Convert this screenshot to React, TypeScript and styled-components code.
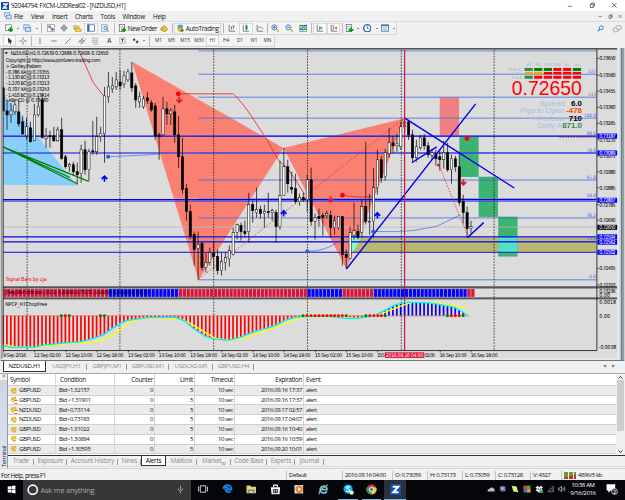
import React from "react";
import styled, { createGlobalStyle } from "styled-components";
import { RiBellFill } from "react-icons/ri";

const GlobalStyle = createGlobalStyle`
  * {
    box-sizing: border-box;
  }
  body {
    margin: 0;
    overflow: hidden;
    font-family: "Open Sans", "Noto Sans", sans-serif;
    font-size: 6.4px;
    letter-spacing: -0.35px;
    color: #111;
    background: #f0f0f0;
  }
  svg {
    display: block;
    letter-spacing: normal;
  }
`;

const Window = styled.div`
  width: 625px;
  height: 500px;
  display: flex;
  flex-direction: column;
  background: #f0f0f0;
  white-space: nowrap;
`;

const TitleBar = styled.div`
  height: 11px;
  display: flex;
  align-items: center;
  background: white;
  padding-left: 1px;
`;

const Title = styled.span`
  flex: 1;
  padding-left: 2px;
  font-size: 6.3px;
  line-height: 10px;
`;

const MenuBar = styled.div`
  height: 11px;
  display: flex;
  align-items: center;
  padding-left: 2px;
  border-bottom: 1px solid #dcdcdc;
`;

const MenuItem = styled.span<{ w: number }>`
  width: ${(props) => props.w}px;
  line-height: 9px;
  font-size: 6.3px;
  letter-spacing: -0.25px;
`;

const Fill = styled.div`
  flex: 1;
`;

const Toolbar = styled.div<{ h: number }>`
  height: ${(props) => props.h}px;
  display: flex;
  align-items: center;
`;

const Group = styled.div<{ h: number }>`
  height: ${(props) => props.h}px;
  display: flex;
  align-items: center;
  padding-left: 3px;
  border: 1px solid #d4d4d4;
  border-width: 0 1px 1px 0;
  background: #f3f3f3;
`;

const Tool = styled.div<{ w: number; active?: boolean }>`
  width: ${(props) => props.w}px;
  height: 11px;
  display: flex;
  align-items: center;
  justify-content: center;
  gap: 1px;
  font-size: 6.4px;
  background: ${(props) => (props.active ? "#fafafa" : "transparent")};
  box-shadow: ${(props) =>
    props.active ? "inset 0 0 0 0.6px #bfc4c8" : "none"};
`;

const Divider = styled.div<{ w: number }>`
  width: ${(props) => props.w}px;
  height: 10px;
  display: flex;
  justify-content: center;
  &::before {
    content: "";
    width: 1px;
    background: #b8b8b8;
  }
`;

const Caret = styled.div<{ w: number }>`
  width: ${(props) => props.w}px;
  display: flex;
  justify-content: center;
  &::before {
    content: "";
    border: 1.5px solid transparent;
    border-top-color: #222;
    margin-top: 1px;
  }
`;

const Period = styled.div<{ w: number; active?: boolean }>`
  width: ${(props) => props.w}px;
  height: 11px;
  line-height: 11px;
  text-align: center;
  font-size: 4.8px;
  letter-spacing: -0.05px;
  color: #333;
  background: ${(props) => (props.active ? "#fafafa" : "transparent")};
  box-shadow: ${(props) =>
    props.active ? "inset 0 0 0 0.6px #c4c4c4" : "none"};
`;

const ChartTabs = styled.div`
  height: 12px;
  display: flex;
  align-items: flex-start;
  padding-left: 3px;
`;

const ChartTab = styled.div<{ w: number; active?: boolean }>`
  width: ${(props) => props.w}px;
  height: 11px;
  line-height: 10px;
  text-align: center;
  font-size: 6.1px;
  letter-spacing: -0.25px;
  color: ${(props) => (props.active ? "#000" : "#8a8a8a")};
  background: ${(props) => (props.active ? "white" : "transparent")};
  border: 1px solid #333;
  border-width: ${(props) => (props.active ? "0 1px 1px 1px" : "0")};
  position: relative;
  &::after {
    content: "";
    position: absolute;
    right: 0;
    top: 3px;
    width: ${(props) => (props.active ? 0 : 1)}px;
    height: 6px;
    background: #999;
  }
`;

const TabArrows = styled.span`
  margin-left: auto;
  padding-right: 4px;
  font-size: 4px;
  line-height: 10px;
  letter-spacing: 6px;
  color: #777;
`;

const Terminal = styled.div`
  height: 95px;
  display: flex;
  border-top: 1px solid #aaa;
`;

const TerminalSide = styled.div`
  width: 7px;
  height: 93px;
  display: flex;
  flex-direction: column;
  align-items: center;
  justify-content: space-between;
  background: linear-gradient(#f0f0f0 6px, #ccd6e2 6px, #dde6f0);
  font-size: 5.8px;
  line-height: 6px;
`;

const SideLabel = styled.span`
  writing-mode: vertical-rl;
  transform: rotate(180deg);
  color: #223;
`;

const TerminalBody = styled.div`
  flex: 1;
  display: flex;
  flex-direction: column;
  border-left: 1px solid #999;
`;

const TableArea = styled.div`
  height: 82px;
  display: flex;
  border-bottom: 1px solid #333;
  background: white;
`;

const Table = styled.div`
  flex: 1;
`;

const TableRow = styled.div<{ shaded?: boolean; head?: boolean }>`
  display: grid;
  grid-template-columns: 48px 59px 40px 40px 40px 69px 1fr;
  height: ${(props) => (props.head ? 11.7 : 9.77)}px;
  line-height: ${(props) => (props.head ? 11 : 8.6)}px;
  background: ${(props) => (props.shaded ? "#ebebeb" : "white")};
  border-bottom: 1px solid #cfcfcf;
  font-size: ${(props) => (props.head ? 6.3 : 6)}px;
  letter-spacing: ${(props) => (props.head ? -0.3 : -0.4)}px;
`;

const Cell = styled.div<{ right?: boolean; pad?: number }>`
  display: flex;
  align-items: center;
  justify-content: ${(props) => (props.right ? "flex-end" : "flex-start")};
  padding: 0 1px 0 ${(props) => props.pad ?? 2}px;
  border-right: 1px solid #d6d6d6;
  &:last-child {
    border-right: none;
  }
`;

const Bell = styled.span<{ muted?: boolean }>`
  position: relative;
  width: 9px;
  color: #e0b020;
  &::after {
    content: "";
    display: ${(props) => (props.muted ? "block" : "none")};
    position: absolute;
    right: 1px;
    bottom: 0;
    width: 4px;
    height: 4px;
    border-radius: 50%;
    background: linear-gradient(#e05030 1.4px, white 1.4px 2.6px, #e05030 2.6px);
  }
`;

const Scrollbar = styled.div`
  width: 9px;
  display: flex;
  flex-direction: column;
  align-items: center;
  justify-content: space-between;
  background: #f0f0f0;
  padding: 1px 0;
`;

const Thumb = styled.div`
  width: 7px;
  height: 51px;
  background: #cdcdcd;
  margin: -6px 0 12px;
`;

const BottomTabs = styled.div`
  height: 11px;
  display: flex;
  align-items: flex-start;
  border-bottom: 1px solid #ddd;
`;

const BottomTab = styled(ChartTab)`
  font-size: 6.2px;
  letter-spacing: -0.15px;
  height: 10px;
  line-height: 9px;
`;

const Badge = styled.sub`
  color: red;
  font-size: 4px;
  line-height: 0;
`;

const StatusBar = styled.div`
  height: 12px;
  display: flex;
  align-items: center;
  border-top: 1px solid #d5d5d5;
  font-size: 6px;
  letter-spacing: -0.42px;
  padding-top: 1px;
`;

const StatusCell = styled.div<{ w: number }>`
  width: ${(props) => props.w}px;
  height: 9px;
  line-height: 9px;
  padding-left: 2px;
  display: flex;
  align-items: center;
  gap: 2px;
  border-left: 1px solid #c4c4c4;
  &:first-child {
    border-left: none;
    padding-left: 1px;
    font-size: 6.3px;
  }
`;

const Taskbar = styled.div`
  height: 20px;
  display: flex;
  align-items: stretch;
  background: #04060a;
`;

const Task = styled.div<{ w: number; open?: boolean; active?: boolean }>`
  width: ${(props) => props.w}px;
  display: flex;
  align-items: center;
  justify-content: center;
  background: ${(props) => (props.active ? "#2c3038" : "transparent")};
  border-bottom: 1.5px solid ${(props) => (props.open ? "#76b9ed" : "transparent")};
  padding-bottom: 1px;
`;

const SearchBox = styled.div`
  width: 168px;
  display: flex;
  align-items: center;
  gap: 2px;
  padding: 0 6px 1px 4px;
  background: #363738;
  color: #a9a9a9;
  font-size: 7.5px;
  letter-spacing: -0.25px;
`;

const Clock = styled.div`
  width: 32px;
  text-align: center;
  color: white;
  font-size: 6px;
  line-height: 8.3px;
  padding-top: 1px;
`;

const FIRST_X = 2.5;
const STEP = 3.907;

// [high, low, bodyTop, bodyBottom, bearish]
const candles: number[][] = [
  [87, 112, 88, 111, 1],
  [100, 130, 111, 115, 1],
  [103, 123, 111, 115, 0],
  [100, 115, 105, 112, 0],
  [100, 127, 112, 124, 1],
  [116, 135, 122, 134, 1],
  [118, 140, 127, 136, 0],
  [122, 142, 128, 142, 1],
  [104, 141, 115, 141, 0],
  [96, 117, 107, 115, 0],
  [93, 139, 100, 137.7, 1],
  [128, 148, 136.5, 139, 0],
  [131, 148, 136, 137, 1],
  [127, 142, 136, 141, 1],
  [127, 142, 130, 141, 0],
  [118, 160, 130, 158.5, 1],
  [155, 169, 157, 167, 1],
  [163, 172, 165, 167, 0],
  [162, 176, 165, 172, 1],
  [163, 185, 172, 175, 1],
  [145, 183, 150, 174, 0],
  [141, 175, 150, 170, 1],
  [149, 181, 152, 170, 0],
  [121, 155, 151, 152, 1],
  [117, 155, 137, 152, 0],
  [127, 142, 134, 137, 0],
  [87, 163, 96, 134, 0],
  [72, 103, 87, 97, 0],
  [77, 93, 86, 89, 0],
  [72, 90, 80, 87, 0],
  [70, 90, 82, 86, 1],
  [71, 88, 76, 84, 0],
  [69, 82, 72, 80, 0],
  [62, 92, 73, 88, 1],
  [83, 108, 86, 100, 1],
  [92, 108, 97, 102, 0],
  [96, 109, 99, 107, 0],
  [92, 104, 98, 101, 1],
  [100, 112, 103, 110, 1],
  [103, 140, 106, 136, 1],
  [133, 160, 135, 137, 1],
  [97, 136, 109, 135, 0],
  [102, 125, 109, 114, 1],
  [108, 125, 111, 114, 0],
  [105, 143, 112, 135, 1],
  [116, 168, 135, 157, 1],
  [138, 194, 157, 190, 1],
  [184, 221, 189, 212, 1],
  [205, 240, 212, 237, 1],
  [232, 266, 235, 250, 1],
  [232, 280, 245, 249, 0],
  [242, 271, 244, 268, 1],
  [253, 273, 263, 268, 0],
  [248, 266, 253, 263, 0],
  [241, 270, 254, 257, 1],
  [250, 275, 257, 271, 1],
  [253, 276, 262, 271, 0],
  [253, 271, 258, 263, 0],
  [246, 267, 251, 259, 0],
  [228, 256, 233, 255, 0],
  [224, 240, 225, 233, 0],
  [223, 241, 226, 232, 1],
  [221, 238, 232, 234, 1],
  [193, 243, 205, 232, 0],
  [201, 223, 205, 211, 1],
  [188, 218, 210, 213, 0],
  [206, 219, 210, 214, 1],
  [205, 228, 212, 214, 0],
  [193, 218, 212, 213, 1],
  [209, 221, 211, 213, 0],
  [210, 243, 213, 227, 1],
  [161, 230, 196, 227, 0],
  [148, 196, 167, 196, 0],
  [160, 193, 167, 184, 1],
  [172, 194, 188, 189.5, 1],
  [174, 204, 189, 202, 1],
  [194, 206, 198, 202, 0],
  [193, 202, 198, 200, 1],
  [175, 212, 180, 200, 0],
  [168, 226, 180, 222, 1],
  [214, 240, 218, 222, 0],
  [209, 227, 217, 219, 1],
  [213, 236, 216, 218, 1],
  [211, 219, 214, 216, 0],
  [211, 238, 216, 228, 1],
  [216, 235, 221, 228, 0],
  [217, 230, 217, 228, 0],
  [217, 266, 217, 255, 1],
  [250, 269, 255, 258, 1],
  [227, 260, 233, 259, 0],
  [203, 240, 231, 236, 0],
  [225, 240, 232, 238, 1],
  [200, 238, 207, 233, 0],
  [142, 225, 207, 222, 1],
  [194, 235, 222, 223, 0],
  [168, 238, 188, 222, 0],
  [150, 195, 160, 188, 0],
  [156, 183, 160, 178, 1],
  [149, 181, 153, 177, 0],
  [128, 158, 143, 154, 0],
  [136, 153, 143, 146, 1],
  [134, 152, 144, 146, 0],
  [122, 150, 127, 147, 0],
  [118, 133, 122, 127, 0],
  [120, 140, 122, 135, 1],
  [130, 162, 135, 158, 1],
  [140, 162, 147, 158, 0],
  [135, 150, 138, 148, 0],
  [134, 150, 138, 146, 1],
  [142, 158, 146, 155, 1],
  [149, 160, 153, 156, 0],
  [150, 166, 154, 159, 1],
  [150, 171, 157, 160, 1],
  [141, 169, 153, 160, 0],
  [143, 172, 153, 170, 1],
  [155, 184, 159, 170, 0],
  [156, 172, 159, 167, 1],
  [152, 206, 167, 203, 1],
  [195, 224, 202, 213, 1],
  [207, 238, 213, 229, 1],
  [221, 235, 227, 229, 0],
];

const fastLine = [
  [2.7, 346], [10, 348], [33, 348], [45, 345.5], [60, 344], [80, 342.5],
  [90, 340], [103, 335.5], [112, 329], [120, 324], [127, 321], [150, 318],
  [175, 318], [185, 322], [193, 329], [205, 337], [213, 339.5], [228, 341],
  [240, 338], [255, 332], [270, 328], [278, 325], [285, 321], [295, 318],
  [310, 317], [330, 317], [345, 319], [360, 319], [375, 316], [385, 311],
  [395, 305.5], [405, 303], [415, 303], [430, 303.5], [445, 306], [455, 308],
  [462, 312], [468, 316],
];

const slowLine = [
  [2.7, 345], [15, 347.5], [35, 348], [50, 346], [70, 344], [90, 343],
  [105, 340], [119, 331], [130, 322], [145, 318.5], [165, 318.5],
  [180, 319.5], [190, 324], [205, 333], [215, 339], [228, 341], [245, 338.5],
  [260, 333], [275, 328], [290, 322], [300, 318.5], [315, 317], [340, 318],
  [360, 319], [380, 315], [400, 307], [412, 303], [430, 303], [445, 305],
  [457, 306.5], [468, 309.5],
];

const toPoints = (line: number[][]) => line.map((p) => p.join(",")).join(" ");

const valueAt = (line: number[][], x: number) => {
  const i = line.findIndex((p) => p[0] >= x);
  if (i <= 0) return line[0][1];
  const [x0, y0] = line[i - 1];
  const [x1, y1] = line[i];
  return y0 + ((y1 - y0) * (x - x0)) / (x1 - x0);
};

const fibs: [number, string][] = [
  [74.3, "127"], [97.3, "113"], [118.3, "100.0"], [136.3, "88.6"],
  [153.3, "78.6"], [180.3, "61.8"], [199, "50.0"], [218.3, "38.2"],
  [242, "23.6"], [280.3, "0.0"],
];

const levels = [136.3, 153.3, 199.8, 201.4, 237.3, 242.3, 252.7];
const days = [26.5, 119.5, 213.5, 307.5, 401.5, 494.5];

const prices: [number, string][] = [
  [58.5, "0.73650"], [75.3, "0.73560"], [91.3, "0.73455"],
  [107.7, "0.73360"], [123.7, "0.73265"], [140, "0.73170"],
  [156, "0.73075"], [172, "0.72980"], [188, "0.72885"], [205, "0.72785"],
  [220.7, "0.72690"], [269, "0.72405"], [285.5, "0.72310"],
];

const priceTags: [number, string, string][] = [
  [136.3, "0.73187", "#0000f0"],
  [153.2, "0.73089", "#0000f0"],
  [200.6, "0.72807", "#0000f0"],
  [227.7, "0.72650", "#000"],
  [237.3, "0.72594", "#0000f0"],
  [242.6, "0.72562", "#0000f0"],
  [252.7, "0.72502", "#0000f0"],
];

const times: [number, string, number][] = [
  [2.5, "9 Sep 2016", 23], [33.5, "12 Sep 02:00", 27],
  [65, "12 Sep 10:00", 27], [96, "12 Sep 18:00", 27],
  [127.5, "13 Sep 02:00", 27], [158.5, "13 Sep 10:00", 27],
  [190, "13 Sep 18:00", 27], [221, "14 Sep 02:00", 27],
  [252.5, "14 Sep 10:00", 27], [283.5, "14 Sep 18:00", 27],
  [315, "15 Sep 02:00", 27], [346, "15 Sep 10:00", 27],
  [377.3, "15 S", 7.4], [424.8, "02:00", 10.5],
  [440, "16 Sep 10:00", 27], [471, "16 Sep 18:00", 27],
];

const patternLines = [
  "- 0.786 XA @ 0.73355", "- 1.130 BC @ 0.73213", "- 1.270 BC @ 0.73213",
  "- 0.707 XA @ 0.73253", "- 1.410 BC @ 0.73414", "- AB=CD @ 0.73480",
];

const signals = [
  ["#2e8b57", "green", "green", "red", "red", "green"],
  ["orange", "orange", "red", "red", "red", "red"],
  ["#2e8b57", "red", "red", "red", "red", "red"],
];
const signalX = [525, 534.6, 544.3, 553.8, 563.6, 573.4];

const dots: [number, string][] = [
  [60.7, "g"], [64.7, "r"], [68.7, "g"], [100, "g"], [104, "g"], [303, "g"],
  [307, "r"], [311, "r"], [315, "r"], [319, "r"], [323, "r"], [327, "r"],
  [331, "r"], [334.6, "r"], [338.5, "r"], [342.4, "r"], [346.3, "g"],
  [366, "g"], [370, "r"], [374, "r"], [378, "r"], [381.5, "r"], [385.3, "g"],
  [447.7, "g"], [451.7, "r"], [455.6, "r"], [459.5, "r"], [463.5, "g"],
];

const trendColor = (x: number) => {
  if (x < 105) return "#dc143c";
  if (x < 175) return "#0000ff";
  if (x < 305) return "#dc143c";
  if (x < 340) return "#0000ff";
  if (x < 371) return "#dc143c";
  if (x < 465) return "#0000ff";
  return "#dc143c";
};

const Marker = ({ x, y, down }: { x: number; y: number; down?: boolean }) => (
  <path
    d="M-2.8 0.4L0-2.6L2.8 0.4M0-2V3"
    transform={`translate(${x} ${y})${down ? " rotate(180)" : ""}`}
    fill="none"
    stroke={down ? "#dc143c" : "#0000ff"}
    strokeWidth={1.7}
  />
);

const Chart = () => (
  <svg
    width="625"
    height="314"
    viewBox="0 48 625 314"
    fontFamily="'DejaVu Sans Condensed', 'DejaVu Sans', sans-serif"
    fontSize="5.3"
  >
    <rect x="0" y="48" width="625" height="314" fill="#dcdcdc" />
    <rect x="0" y="47" width="618" height="2.6" fill="#555" />

    <polygon points="2.7,94 76.7,185.7 2.7,185" fill="#87cefa" />
    <polygon points="131.7,61.7 283.5,148.3 198.3,280.5" fill="#fa8072" />
    <polygon points="283.5,148.3 405,118.3 346.5,269.5" fill="#fa8072" />
    <polygon points="350,237.5 361,237.5 353,253 350,253" fill="#7fffd4" />
    <polygon points="361,238 597,238 597,253 353,253" fill="#bdb76b" />
    <rect x="440" y="97.5" width="19.4" height="39" fill="#f08080" />
    <rect x="459.7" y="136.7" width="19.3" height="40.5" fill="#3cb371" />
    <rect x="479" y="177" width="19.3" height="40.3" fill="#3cb371" />
    <rect x="498.6" y="217" width="19.4" height="40" fill="#3cb371" />
    <rect x="498.6" y="238" width="19.4" height="15" fill="#4fe3c5" />

    <line x1="2" x2="597" y1="227.5" y2="227.5" stroke="#bbb" strokeWidth="0.8" />
    <line x1="198" x2="597" y1="51" y2="51" stroke="#4169e1" strokeWidth="0.7" />
    {fibs.map(([y]) => (
      <line key={y} x1="198" x2="597" y1={y} y2={y} stroke="#4169e1" strokeWidth="0.8" />
    ))}
    {levels.map((y) => (
      <g key={y}>
        <line x1="2" x2="597" y1={y} y2={y} stroke="#fff7b0" strokeWidth="2" opacity="0.35" />
        <line x1="2" x2="597" y1={y} y2={y} stroke="#0000f0" strokeWidth="1.1" />
      </g>
    ))}
    {days.map((x) => (
      <line key={x} x1={x} x2={x} y1="50" y2="351" stroke="#222" strokeWidth="0.8" strokeDasharray="1.6 1.3" />
    ))}

    <path
      d="M78 50L93 83L104 97M178 93.9H233Q236 96 247 110L267 140L278 160L288 169L305 195M342.5 195.5Q355 198 374 197"
      fill="none"
      stroke="#ee2020"
      strokeWidth="0.8"
    />
    <path d="M198 280L405 118" stroke="#f22" strokeWidth="0.7" strokeDasharray="2 1.6" />
    <path d="M439 165L468 236M560 137.7H597" stroke="#f22" strokeWidth="0.8" strokeDasharray="1.5 1.3" />
    <path
      d="M107.7 157L150 155L160 154M307.3 251.7Q324 252 337 243M373 232H400L415 230.7L437 226.7L461 215"
      fill="none"
      stroke="#4169e1"
      strokeWidth="0.7"
    />

    {candles.map(([high, low, top, bottom, bear], i) => {
      const x = FIRST_X + STEP * i;
      return (
        <g key={i} stroke="#000">
          <line x1={x} x2={x} y1={high} y2={low} strokeWidth="0.7" />
          <rect
            x={x - 1.1}
            y={top}
            width="2.2"
            height={bottom - top}
            fill={bear ? "#000" : "#fff"}
            strokeWidth={bear ? 0.6 : 0.5}
          />
        </g>
      );
    })}

    <path
      d="M2.7 147.3L76.7 184M2.7 147.3L88.3 181.7M2.7 147.3L69.3 177.7"
      stroke="green"
      strokeWidth="1.2"
    />
    <path
      d="M346.5 269.5L476 104M405 118.3L514.7 188.3M412 163L437 147M468 238L484 223"
      stroke="#0000f0"
      strokeWidth="1.4"
    />
    <line x1="404.8" x2="404.8" y1="50" y2="351" stroke="#dc143c" strokeWidth="1.2" />

    {[[107.7, 157], [307.3, 251.7], [373.4, 232]].map(([x, y]) => (
      <circle key={x} cx={x} cy={y} r="2.1" fill="#3060d8" />
    ))}
    {[[178, 93.9], [342.5, 195.5], [467.3, 138.7]].map(([x, y]) => (
      <circle key={x} cx={x} cy={y} r="2.4" fill="red" />
    ))}
    <circle cx="438.8" cy="165.4" r="1.3" fill="red" />
    <Marker x={104} y={179} />
    <Marker x={283.6} y={213.8} />
    <Marker x={377.5} y={215.8} />
    <Marker x={179} y={100} down />
    <Marker x={330.7} y={199.5} down />
    <Marker x={463.7} y={182.5} down />

    <path d="M4 52.3H7.2L5.6 54.2Z" />
    <text x="10" y="55.2" textLength="98">NZDUSD,H1  0.72639 0.72686 0.72606 0.72650</text>
    <text x="5" y="61.9" textLength="95">Copyright @ http://www.pointzero-trading.com</text>
    <text x="5" y="67.9" textLength="36">&gt; Gartley Pattern</text>
    {patternLines.map((line, i) => (
      <text key={line} x="5" y={73.6 + i * 5.8} textLength={i === 5 ? 43 : 44}>
        {line}
      </text>
    ))}
    <text x="5" y="281.4" fill="red" fontSize="5.6" textLength="41">Signal Bars by cja</text>

    <g fill="#4169e1" fontSize="4.6" textAnchor="end">
      {fibs.map(([y, label]) => (
        <text key={label} x="596.5" y={y - 1.3}>{label}</text>
      ))}
    </g>

    <g fontFamily="'Liberation Sans', sans-serif">
      <g fontSize="3.8" fill="#a3b8d4">
        {["M1", "M5", "M15", "M30", "H1", "H4"].map((label, i) => (
          <text key={label} x={signalX[i] + 4} y="66" textAnchor="middle">{label}</text>
        ))}
        <text x="509" y="70.9" textLength="13.3">MACD</text>
        <text x="513.5" y="74.8" textLength="8.8">STR</text>
        <text x="512.5" y="78.8" textLength="9.8">EMA</text>
      </g>
      {signals.map((row, r) =>
        row.map((color, c) => (
          <rect key={`${r}${c}`} x={signalX[c]} y={[68, 72, 75.8][r]} width="8.2" height={r === 1 ? 2.4 : 3} fill={color} />
        ))
      )}
      <text x="512.3" y="95.5" fontSize="19.4" fill="red" textLength="70">0.72650</text>
      <g fontSize="8" fill="#a9c0e0">
        <text x="540" y="105.8" textLength="25.5">Spread</text>
        <text x="521" y="113.2" textLength="44">Pips to Open</text>
        <text x="533.5" y="120.8" textLength="31.5">Hi to Low</text>
        <text x="537.5" y="128">Daily A</text>
      </g>
      <g fontSize="7.9" fontWeight="bold" textAnchor="end">
        <text x="582.5" y="105.8">6.0</text>
        <text x="582.5" y="113.2" fill="#ff4500">-478</text>
        <text x="582.5" y="120.8">710</text>
        <text x="582.5" y="128" fill="#2e8b57">871.0</text>
      </g>
    </g>

    <rect x="2" y="286.8" width="616" height="2.2" fill="#555" />
    {candles.map((_, i) => {
      const x = 2.7 + STEP * i;
      return <rect key={i} x={x} y="289.6" width="3.3" height="7.8" fill={trendColor(x)} />;
    })}
    <text x="5" y="295" textLength="143" fontSize="5.2">
      Deep Bar Indicator (33,1) -1.00000 0.73172 -1.00000 -1.00000 0.73172
    </text>
    <rect x="2" y="297.9" width="616" height="2" fill="#555" />

    {candles.map((_, i) => {
      const x = FIRST_X + STEP * i;
      if (x > 467) return null;
      const y = valueAt(fastLine, x);
      const up = y < 316.3;
      const blue = up && x > 380;
      return (
        <rect
          key={i}
          x={x - 1}
          y={up ? y : 316.3}
          width="1.7"
          height={Math.abs(y - 316.3)}
          fill={blue ? "#0000f0" : "red"}
        />
      );
    })}
    <line x1="2" x2="470" y1="316.4" y2="316.4" stroke="#e05040" strokeWidth="0.6" />
    <polyline points={toPoints(slowLine)} fill="none" stroke="#ffff00" strokeWidth="1.3" />
    <polyline points={toPoints(fastLine)} fill="none" stroke="#00f0ff" strokeWidth="1.3" />
    {dots.map(([x, c]) => (
      <circle key={x} cx={x} cy="316.4" r="1.5" fill={c === "g" ? "green" : "red"} />
    ))}
    <text x="4.5" y="306.2" textLength="42">NPCP_HTChopFree</text>

    <path d="M2.5 49V351.2H597.5V49" fill="none" stroke="#222" strokeWidth="0.9" />
    {times.map(([x, label, w]) => (
      <g key={label}>
        {label !== "02:00" && (
          <line x1={x + 0.5} x2={x + 0.5} y1="351" y2="353" stroke="#222" strokeWidth="0.7" />
        )}
        <text x={x} y="357.7" fontSize="5.1" textLength={w}>{label}</text>
      </g>
    ))}
    <rect x="385" y="353" width="39.5" height="5.6" fill="#dc143c" />
    <text x="386" y="357.6" fontSize="5" fill="white" textLength="37.5">2016.09.16 04:00</text>

    {prices.map(([y, label]) => (
      <g key={label}>
        <line x1="597.5" x2="599.5" y1={y} y2={y} stroke="#222" strokeWidth="0.7" />
        <text x="600" y={y + 1.9} textLength="16.3">{label}</text>
      </g>
    ))}
    {priceTags.map(([y, label, color]) => (
      <g key={label}>
        <rect x="598" y={y - 2.5} width="20" height="5" fill={color} />
        <text x="600" y={y + 1.9} fill="white" textLength="16.3">{label}</text>
      </g>
    ))}
    <text x="600" y="293.6" textLength="16.3">0.73236</text>
    <text x="600" y="298">0.00</text>
    <text x="600" y="304.8">0.0018</text>
    <text x="600" y="318.3">0.00</text>
    <text x="599.5" y="349.8" textLength="17.5">-0.0038</text>

    <rect x="0" y="48" width="2" height="313" fill="#9a9a9a" />
    <rect x="618" y="48" width="2" height="313" fill="#e8eef4" />
    <rect x="620" y="48" width="2" height="313" fill="#b4d4ee" />
    <rect x="622" y="48" width="1" height="313" fill="#33454f" />
    <rect x="623" y="48" width="2" height="313" fill="#9a9a9a" />
    <rect x="0" y="359.3" width="620" height="1.2" fill="#eee" />
    <rect x="0" y="361" width="625" height="1" fill="#444" />
  </svg>
);

const icons = {
  logo: (
    <>
      <rect width="10" height="10" fill="#0f4fb5" />
      <path d="M2.5 2.5H7.5L3 7.5H7.8" fill="none" stroke="white" strokeWidth="1.8" />
    </>
  ),
  frames: (
    <>
      <rect x="1" y="1" width="6" height="5" fill="#e6f2fc" stroke="#5b92c8" />
      <rect x="3" y="4" width="6" height="4.5" fill="#cfe4f8" stroke="#5b92c8" />
    </>
  ),
  addChart: (
    <>
      <rect x="0.7" y="1" width="7" height="6.5" fill="white" stroke="#557" strokeWidth="0.7" />
      <path d="M6.8 3.5V10M3.5 6.7H10" stroke="#10a020" strokeWidth="2.4" />
    </>
  ),
  market: (
    <>
      <rect x="0.7" y="0.7" width="8.6" height="8.6" fill="white" stroke="#88a" strokeWidth="0.8" />
      <path d="M2.5 5V2.5H5" stroke="#1c9e3a" strokeWidth="1.5" fill="none" />
      <path d="M3.5 3.5L7.5 7.5" stroke="#e05020" strokeWidth="1.6" />
      <path d="M7.5 5V7.5H5" stroke="#2060d0" strokeWidth="1.3" fill="none" />
    </>
  ),
  target: (
    <>
      <circle cx="5" cy="5" r="2.8" fill="none" stroke="#666" />
      <path d="M5 0V10M0 5H10" stroke="#666" strokeWidth="0.8" />
    </>
  ),
  folders: (
    <>
      <path d="M1 2H4L5 3H7V6H1Z" fill="#f7d34c" stroke="#a8801c" strokeWidth="0.7" />
      <path d="M3 5H6L7 6H9.5V9.2H3Z" fill="#f7d34c" stroke="#a8801c" strokeWidth="0.7" />
    </>
  ),
  panel: (
    <>
      <rect x="0.7" y="1" width="8.6" height="8" fill="white" stroke="#3a70b0" />
      <rect x="1" y="1" width="2" height="8" fill="#2d62a6" />
    </>
  ),
  tester: (
    <>
      <rect x="0.7" y="1" width="7" height="8" fill="#eef5fc" stroke="#6a92bc" strokeWidth="0.8" />
      <circle cx="5.5" cy="5" r="2" fill="#d4e9fb" stroke="#4678a8" />
      <path d="M7 6.5L9.5 9.5" stroke="#4678a8" strokeWidth="1.2" />
    </>
  ),
  order: (
    <>
      <rect x="1.5" y="0.7" width="6" height="8" fill="white" stroke="#557" strokeWidth="0.8" />
      <path d="M3 3H6M3 5H5" stroke="#557" strokeWidth="0.7" />
      <path d="M7 4.2V10M4.1 7.1H9.9" stroke="#10a020" strokeWidth="2.3" />
    </>
  ),
  gold: (
    <path d="M1 5L5 2L9 6L6 9L1 7Z" fill="#edbd34" stroke="#a87410" strokeWidth="0.8" />
  ),
  auto: (
    <>
      <ellipse cx="5" cy="3" rx="3.3" ry="2.3" fill="#50a0c8" />
      <path d="M1 5Q5 3 9 5L8 9H3Z" fill="#e2b23a" />
      <path d="M5.8 5.2L10 7.5L5.8 9.8Z" fill="#18a030" />
    </>
  ),
  bars: (
    <path d="M1.5 1V9H9M4.5 3V7M7 2V6M6 2.5H8M3.5 5H4.5" fill="none" stroke="#456" strokeWidth="0.9" />
  ),
  candle: (
    <>
      <path d="M1.5 1V9H9M5.5 0.5V8" fill="none" stroke="#456" strokeWidth="0.9" />
      <rect x="4.2" y="2" width="2.8" height="4.5" fill="#18a030" />
    </>
  ),
  lineChart: (
    <>
      <path d="M1.5 1V9H9" fill="none" stroke="#456" strokeWidth="0.9" />
      <path d="M2 6Q4 2 6 4T9 6" fill="none" stroke="#3a9a50" strokeWidth="0.9" />
    </>
  ),
  zoomIn: (
    <>
      <circle cx="4" cy="4" r="3" fill="#d8ecfb" stroke="#3a78b8" />
      <path d="M4 2.5V5.5M2.5 4H5.5" stroke="#1850a0" strokeWidth="0.9" />
      <path d="M6.2 6.2L9.2 9.2" stroke="#d8a83c" strokeWidth="1.7" />
    </>
  ),
  zoomOut: (
    <>
      <circle cx="4" cy="4" r="3" fill="#d8ecfb" stroke="#3a78b8" />
      <path d="M2.5 4H5.5" stroke="#1850a0" strokeWidth="0.9" />
      <path d="M6.2 6.2L9.2 9.2" stroke="#d8a83c" strokeWidth="1.7" />
    </>
  ),
  tiles: (
    <>
      <rect x="0.5" y="1" width="4.3" height="3.8" fill="#3c9c3c" />
      <rect x="5.2" y="1" width="4.3" height="3.8" fill="#2c60b0" />
      <rect x="0.5" y="5.2" width="4.3" height="3.8" fill="#2c60b0" />
      <rect x="5.2" y="5.2" width="4.3" height="3.8" fill="#3c9c3c" />
      <path d="M1.2 3.4H4.2M5.9 3.4H8.9M1.2 7.6H4.2M5.9 7.6H8.9" stroke="white" strokeWidth="1.2" />
    </>
  ),
  scroll: (
    <>
      <path d="M1.5 1V9H9M4.5 3V8" fill="none" stroke="#456" strokeWidth="0.9" />
      <path d="M5.5 3L8.5 5L5.5 7Z" fill="#18a030" />
    </>
  ),
  shift: (
    <>
      <path d="M1.5 1V9H9M4 1V8" fill="none" stroke="#456" strokeWidth="0.9" />
      <path d="M8.5 3L5.5 5L8.5 7Z" fill="#d04020" />
    </>
  ),
  clock: (
    <>
      <circle cx="5" cy="5" r="4.2" fill="white" stroke="#1f66c0" strokeWidth="1.6" />
      <path d="M5 2.5V5H7" fill="none" stroke="#246" strokeWidth="0.9" />
    </>
  ),
  template: (
    <>
      <rect x="0.5" y="1" width="9" height="8" fill="white" stroke="#3a78b8" />
      <path d="M0.5 2H9.5" stroke="#3a78b8" strokeWidth="1.6" />
      <path d="M2 5L4 4.5L6 5.5L8 4M2 7.3H8" fill="none" stroke="#567" strokeWidth="0.7" />
    </>
  ),
  cursor: <path d="M3 0.5V8.5L4.8 6.7L6 9.5L7.2 9L6 6.4H8.4Z" fill="#222" />,
  cross: <path d="M5 0.5V4M5 6V9.5M0.5 5H4M6 5H9.5" stroke="#555" strokeWidth="0.9" />,
  vline: <path d="M5 1V9" stroke="#555" strokeWidth="0.9" />,
  hline: <path d="M1.5 5H8.5" stroke="#555" strokeWidth="0.9" />,
  diag: <path d="M1.5 8.5L8.5 1.5" stroke="#555" strokeWidth="0.9" />,
  channel: <path d="M0.5 7L7 1M3 9L9.5 3M2 4L6 8M4 2.5L8 6.5" stroke="#555" strokeWidth="0.9" />,
  fibo: <path d="M1 1.5H9M1 4H9M1 6.5H9M3 9H9" stroke="#666" strokeWidth="0.8" strokeDasharray="1.4 0.4" />,
  label: (
    <>
      <rect x="1" y="1" width="8" height="8" fill="none" stroke="#555" strokeWidth="0.8" strokeDasharray="1 0.6" />
      <path d="M3 3.3H7M5 3V7.3" stroke="#222" strokeWidth="1.1" />
    </>
  ),
  shapes: (
    <path d="M1 4L3 1.5L5 4L3 6ZM5 7L7.5 4.5L9.5 7L7.5 9.2Z" fill="#444" />
  ),
  search: (
    <>
      <circle cx="6" cy="4" r="2.8" fill="none" stroke="#2f6fc4" strokeWidth="1.2" />
      <path d="M4 6L1 9" stroke="#2f6fc4" strokeWidth="1.6" />
    </>
  ),
  chat: (
    <>
      <ellipse cx="3.8" cy="5.8" rx="3" ry="2.2" fill="#eee" stroke="#aaa" />
      <ellipse cx="6.7" cy="3.5" rx="2.8" ry="2.1" fill="#eee" stroke="#aaa" />
    </>
  ),
  minimize: <path d="M1.5 5.5H8.5" stroke="#222" />,
  restore: <path d="M2 3.5H6.5V8.5H2ZM3.8 3V1.5H8.3V6.5H7" fill="none" stroke="#222" />,
  close: <path d="M1.5 1.5L8.5 8.5M8.5 1.5L1.5 8.5" stroke="#222" />,
  windows: <path d="M0.8 1.8L4.5 1.3V4.7H0.8ZM5 1.2L9.4 0.5V4.7H5ZM0.8 5.2H4.5V8.6L0.8 8.1ZM5 5.2H9.4V9.4L5 8.7Z" fill="white" />,
  cortana: <circle cx="5" cy="5" r="4" fill="none" stroke="white" strokeWidth="1.4" />,
  mic: <path d="M5 1V5.5M2.8 4V5.5Q5 8.5 7.2 5.5V4M5 7V9.2" fill="none" stroke="#aaa" />,
  taskView: <path d="M2.3 1.8H7.7V8.2H2.3ZM0.6 2.5V7.5M9.4 2.5V7.5" fill="none" stroke="white" strokeWidth="0.8" />,
  edge: <path d="M1 4.6Q2 1 5.2 1Q9 1.2 9 5.3H3.2Q4 8.6 8.4 7.3M1.7 4Q4 2 6.8 4.5" fill="none" stroke="#1684e0" strokeWidth="1.7" />,
  explorer: (
    <>
      <path d="M0.5 1.5H4L5 2.5H9.5V8.8H0.5Z" fill="#f6ce5a" />
      <path d="M2.5 8.8V6H7.5V8.8" fill="none" stroke="#38a0e0" strokeWidth="1.4" />
    </>
  ),
  store: (
    <>
      <path d="M3.3 3V1H6.7V3" fill="none" stroke="white" />
      <path d="M0.8 3H9.2L8.6 9.4H1.4Z" fill="white" />
      <path d="M3 5H7V8H3ZM5 5V8M3 6.5H7" fill="none" stroke="#111" strokeWidth="0.7" />
    </>
  ),
  media: (
    <>
      <rect x="0.5" y="1" width="8.2" height="8" fill="#d8e6f2" />
      <circle cx="5" cy="5" r="3.5" fill="#f08020" />
      <path d="M4 3L7 5L4 7Z" fill="white" />
    </>
  ),
  ie: (
    <>
      <path d="M8.2 6.8Q5 9.6 2.3 7Q1 3.2 4.8 2Q8.4 2 8.2 5.2H3" fill="none" stroke="#5fc0f2" strokeWidth="1.6" />
      <path d="M0.8 9.5Q1 5 9 0.8" fill="none" stroke="#f4cc30" strokeWidth="0.9" />
    </>
  ),
  skype: (
    <>
      <circle cx="4.6" cy="4.6" r="4.2" fill="#00aff0" />
      <path d="M6.4 3Q4 1.7 3 3.3Q3.3 4.4 5 4.7Q7 5.4 5.8 6.6Q4 7.6 2.8 6.1" fill="none" stroke="white" />
      <circle cx="7.8" cy="7.8" r="2" fill="#e4f4d0" />
    </>
  ),
  chrome: (
    <>
      <circle cx="5" cy="5" r="4.6" fill="#e03a2c" />
      <path d="M5 5L1 2.7A4.6 4.6 0 0 0 5 9.6Z" fill="#2e9e4a" />
      <path d="M5 5L5 9.6A4.6 4.6 0 0 0 9.2 3.2H5Z" fill="#f6c820" />
      <circle cx="5" cy="5" r="2" fill="#3a7ce0" stroke="white" strokeWidth="0.8" />
    </>
  ),
  cloud: <path d="M1 8Q0 5 3 5Q4 2 7 3.5Q10 4 9.5 8Z" fill="#bbb" />,
  globe: (
    <>
      <circle cx="5" cy="5" r="4" fill="#5a6c9c" />
      <path d="M2 3L8 7M3 6L7 3" stroke="#dde" />
    </>
  ),
  note: <path d="M0.8 1L7 2L9 9L3 8Z" fill="#d6f080" />,
  blocks: (
    <>
      <rect x="0.5" y="0.8" width="4.5" height="4.4" fill="#e84020" />
      <rect x="5" y="0.8" width="4.5" height="4.4" fill="#40a840" />
      <rect x="0.5" y="5.2" width="4.5" height="4.2" fill="#2878d8" />
      <rect x="5" y="5.2" width="4.5" height="4.2" fill="#f0a020" />
    </>
  ),
  dropbox: (
    <>
      <path d="M3 1L5 2.7L7 1L9.5 3L7.5 4.7L9.5 6.3L5 9L0.5 6.3L2.5 4.7L0.5 3Z" fill="#e8eef4" />
      <circle cx="7.6" cy="7.6" r="2.1" fill="#30b050" />
      <path d="M3 4L5 5.5L7 4" fill="none" stroke="#204060" />
    </>
  ),
  wifi: <path d="M1 9L9 1V9ZM3 9Q3 5 9 4M6 9Q6 7 9 7" fill="none" stroke="#999" strokeWidth="0.8" />,
  volume: <path d="M0.5 3.7H2.4L4.6 1.6V8.4L2.4 6.3H0.5ZM6 3.5Q7 5 6 6.5M7.7 2.2Q9.8 5 7.7 7.8" fill="none" stroke="#ddd" strokeWidth="0.8" />,
  notify: (
    <>
      <path d="M0.5 1H8V6.5H4L2 8.4V6.5H0.5Z" fill="white" />
      <circle cx="7.4" cy="7.4" r="2.6" fill="#333" stroke="#ddd" strokeWidth="0.6" />
    </>
  ),
};

const Icon = ({ name, size = 8.5 }: { name: keyof typeof icons; size?: number }) => (
  <svg width={size} height={size} viewBox="0 0 10 10" style={{ flex: "none" }}>
    {icons[name]}
  </svg>
);

const NoticeCount = styled.span`
  color: white;
  font-size: 5px;
  line-height: 6px;
  position: relative;
  left: -4.6px;
  top: 2.6px;
  width: 0;
`;

const TrafficBars = styled.span`
  width: 12px;
  height: 7px;
  background: repeating-linear-gradient(90deg, transparent 0 2px, #f0f0f0 2px 2.5px),
    linear-gradient(165deg, #6c9a3a 55%, #b8342c 56%);
`;

const alerts: [string, string, string, boolean][] = [
  ["GBPUSD", "Bid>1.32157", "2016.09.16 17:37", false],
  ["GBPUSD", "Bid <1.31901", "2016.09.16 17:37", true],
  ["NZDUSD", "Bid>0.73114", "2016.09.17 02:57", true],
  ["NZDUSD", "Bid>0.73183", "2016.09.17 04:07", false],
  ["GBPUSD", "Bid>1.31022", "2016.09.16 10:40", false],
  ["GBPUSD", "Bid>1.30884", "2016.09.16 10:59", false],
  ["GBPUSD", "Bid <1.30595", "2016.09.20 10:01", false],
];

const menus: [string, number][] = [
  ["File", 17], ["View", 21], ["Insert", 23], ["Charts", 25.5],
  ["Tools", 22], ["Window", 30.5], ["Help", 20],
];

const periods: [string, number][] = [
  ["M1", 13], ["M5", 13], ["M15", 14], ["M30", 14], ["H1", 13], ["H4", 14],
  ["D1", 14], ["W1", 14], ["MN", 13],
];

function App() {
  return (
    <>
      <GlobalStyle />
      <Window>
        <TitleBar>
          <Icon name="logo" size={8} />
          <Title>92044794: FXCM-USDReal02 - [NZDUSD,H1]</Title>
          <Tool w={22}><Icon name="minimize" size={6} /></Tool>
          <Tool w={22}><Icon name="restore" size={6.5} /></Tool>
          <Tool w={22}><Icon name="close" size={6.5} /></Tool>
        </TitleBar>
        <MenuBar>
          <Tool w={12}><Icon name="frames" size={8} /></Tool>
          {menus.map(([label, w]) => (
            <MenuItem key={label} w={w}>{label}</MenuItem>
          ))}
          <Fill />
          <Tool w={10}><Icon name="minimize" size={4.5} /></Tool>
          <Tool w={10}><Icon name="restore" size={5} /></Tool>
          <Tool w={10}><Icon name="close" size={4.5} /></Tool>
        </MenuBar>
        <Toolbar h={13}>
          <Group h={13}>
            <Tool w={12}><Icon name="addChart" /></Tool>
            <Caret w={5} />
            <Tool w={15}><Icon name="frames" /></Tool>
            <Caret w={4} />
            <Divider w={5} />
            <Tool w={13}><Icon name="market" size={8} /></Tool>
            <Tool w={14}><Icon name="target" size={8} /></Tool>
            <Tool w={13}><Icon name="folders" /></Tool>
            <Tool w={14} active><Icon name="panel" size={8} /></Tool>
            <Tool w={14}><Icon name="tester" size={8} /></Tool>
            <Divider w={5} />
            <Tool w={41}><Icon name="order" />New Order</Tool>
            <Tool w={13}><Icon name="gold" /></Tool>
            <Divider w={3} />
            <Tool w={47} active><Icon name="auto" />AutoTrading</Tool>
            <Divider w={4} />
            <Tool w={14}><Icon name="bars" size={8} /></Tool>
            <Tool w={14} active><Icon name="candle" size={8} /></Tool>
            <Tool w={13}><Icon name="lineChart" size={8} /></Tool>
            <Divider w={2} />
            <Tool w={14}><Icon name="zoomIn" /></Tool>
            <Tool w={14}><Icon name="zoomOut" /></Tool>
            <Tool w={14}><Icon name="tiles" /></Tool>
            <Divider w={3} />
            <Tool w={14} active><Icon name="scroll" size={8} /></Tool>
            <Tool w={13} active><Icon name="shift" size={8} /></Tool>
            <Divider w={4} />
            <Tool w={11}><Icon name="order" /></Tool>
            <Caret w={5} />
            <Tool w={14}><Icon name="clock" /></Tool>
            <Caret w={5} />
            <Tool w={12}><Icon name="template" size={8} /></Tool>
            <Caret w={5} />
          </Group>
          <Fill />
          <Tool w={15}><Icon name="search" size={7} /></Tool>
          <Tool w={17}><Icon name="chat" size={10} /></Tool>
        </Toolbar>
        <Toolbar h={13}>
          <Group h={12}>
            <Tool w={13} active><Icon name="cursor" size={7.5} /></Tool>
            <Tool w={14}><Icon name="cross" size={8} /></Tool>
            <Divider w={3} />
            <Tool w={14}><Icon name="vline" size={8} /></Tool>
            <Tool w={14}><Icon name="hline" size={8} /></Tool>
            <Tool w={14}><Icon name="diag" size={8} /></Tool>
            <Tool w={13}><Icon name="channel" size={8} /></Tool>
            <Tool w={14}><Icon name="fibo" size={8} /></Tool>
            <Tool w={14}>A</Tool>
            <Tool w={13}><Icon name="label" size={7} /></Tool>
            <Tool w={12}><Icon name="shapes" size={7} /></Tool>
            <Caret w={5} />
            <Divider w={6} />
            {periods.map(([label, w]) => (
              <Period key={label} w={w} active={label === "H1"}>{label}</Period>
            ))}
          </Group>
        </Toolbar>
        <Chart />
        <ChartTabs>
          <ChartTab w={43} active>NZDUSD,H1</ChartTab>
          <ChartTab w={41}>USDJPY,H1</ChartTab>
          <ChartTab w={40}>GBPJPY,M1</ChartTab>
          <ChartTab w={42}>GBPUSD,M1</ChartTab>
          <ChartTab w={44}>USDCAD,M5</ChartTab>
          <ChartTab w={41}>GBPUSD,H4</ChartTab>
          <TabArrows>◀▶</TabArrows>
        </ChartTabs>
        <Terminal>
          <TerminalSide>
            <Icon name="close" size={4} />
            <SideLabel>Terminal</SideLabel>
          </TerminalSide>
          <TerminalBody>
            <TableArea>
              <Table>
                <TableRow head>
                  <Cell>Symbol</Cell>
                  <Cell pad={4}>Condition</Cell>
                  <Cell right>Counter</Cell>
                  <Cell right>Limit</Cell>
                  <Cell right>Timeout</Cell>
                  <Cell right>Expiration</Cell>
                  <Cell>Event</Cell>
                </TableRow>
                {alerts.map(([symbol, condition, expiration, muted], i) => (
                  <TableRow key={i} shaded={i % 2 === 0}>
                    <Cell>
                      <Bell muted={muted}><RiBellFill size={7.5} /></Bell>
                      {symbol}
                    </Cell>
                    <Cell pad={3}>{condition}</Cell>
                    <Cell right>0</Cell>
                    <Cell right>5</Cell>
                    <Cell right>10 sec</Cell>
                    <Cell right>{expiration}</Cell>
                    <Cell>alert</Cell>
                  </TableRow>
                ))}
              </Table>
              <Scrollbar>
                <svg width="5" height="5" viewBox="0 0 10 10">
                  <path d="M1 7L5 3L9 7" fill="none" stroke="#333" strokeWidth="2" />
                </svg>
                <Thumb />
                <svg width="5" height="5" viewBox="0 0 10 10">
                  <path d="M1 3L5 7L9 3" fill="none" stroke="#333" strokeWidth="2" />
                </svg>
              </Scrollbar>
            </TableArea>
            <BottomTabs>
              <BottomTab w={26}>Trade</BottomTab>
              <BottomTab w={33}>Exposure</BottomTab>
              <BottomTab w={51}>Account History</BottomTab>
              <BottomTab w={23}>News</BottomTab>
              <BottomTab w={25} active>Alerts</BottomTab>
              <BottomTab w={31}>Mailbox</BottomTab>
              <BottomTab w={34}>Market<Badge>92</Badge></BottomTab>
              <BottomTab w={36}>Code Base</BottomTab>
              <BottomTab w={28}>Experts</BottomTab>
              <BottomTab w={29}>Journal</BottomTab>
            </BottomTabs>
          </TerminalBody>
        </Terminal>
        <StatusBar>
          <StatusCell w={286}>For Help, press F1</StatusCell>
          <StatusCell w={56}>Default</StatusCell>
          <StatusCell w={50}>2016.09.16 04:00</StatusCell>
          <StatusCell w={35}>O: 0.73059</StatusCell>
          <StatusCell w={35}>H: 0.73173</StatusCell>
          <StatusCell w={33}>L: 0.73059</StatusCell>
          <StatusCell w={35}>C: 0.73128</StatusCell>
          <StatusCell w={31}>V: 4327</StatusCell>
          <StatusCell w={62}><TrafficBars />4896/5 kb</StatusCell>
        </StatusBar>
        <Taskbar>
          <Task w={23}><Icon name="windows" size={9} /></Task>
          <SearchBox>
            <Icon name="cortana" size={11.5} />
            Ask me anything
            <Fill />
            <Icon name="mic" size={9} />
          </SearchBox>
          <Task w={24}><Icon name="taskView" size={10} /></Task>
          <Task w={25}><Icon name="edge" size={10.5} /></Task>
          <Task w={23}><Icon name="explorer" size={10.5} /></Task>
          <Task w={24}><Icon name="store" size={11} /></Task>
          <Task w={24}><Icon name="media" size={10.5} /></Task>
          <Task w={24}><Icon name="ie" size={11} /></Task>
          <Task w={3} />
          <Task w={20} open><Icon name="skype" size={11} /></Task>
          <Task w={4} />
          <Task w={19} open><Icon name="chrome" size={11} /></Task>
          <Task w={3} />
          <Task w={22} open active><Icon name="logo" size={11} /></Task>
          <Fill />
          <Task w={12}><Icon name="cloud" size={8} /></Task>
          <Task w={12}><Icon name="globe" size={7.5} /></Task>
          <Task w={12}><Icon name="note" size={8} /></Task>
          <Task w={12}><Icon name="blocks" size={8} /></Task>
          <Task w={12}><Icon name="dropbox" size={8.5} /></Task>
          <Task w={11}><Icon name="wifi" size={7.5} /></Task>
          <Task w={11}><Icon name="volume" size={8} /></Task>
          <Clock>10:38 AM<br />9/16/2016</Clock>
          <Task w={26}>
            <Icon name="notify" size={11.5} />
            <NoticeCount>2</NoticeCount>
          </Task>
        </Taskbar>
      </Window>
    </>
  );
}

export default App;
